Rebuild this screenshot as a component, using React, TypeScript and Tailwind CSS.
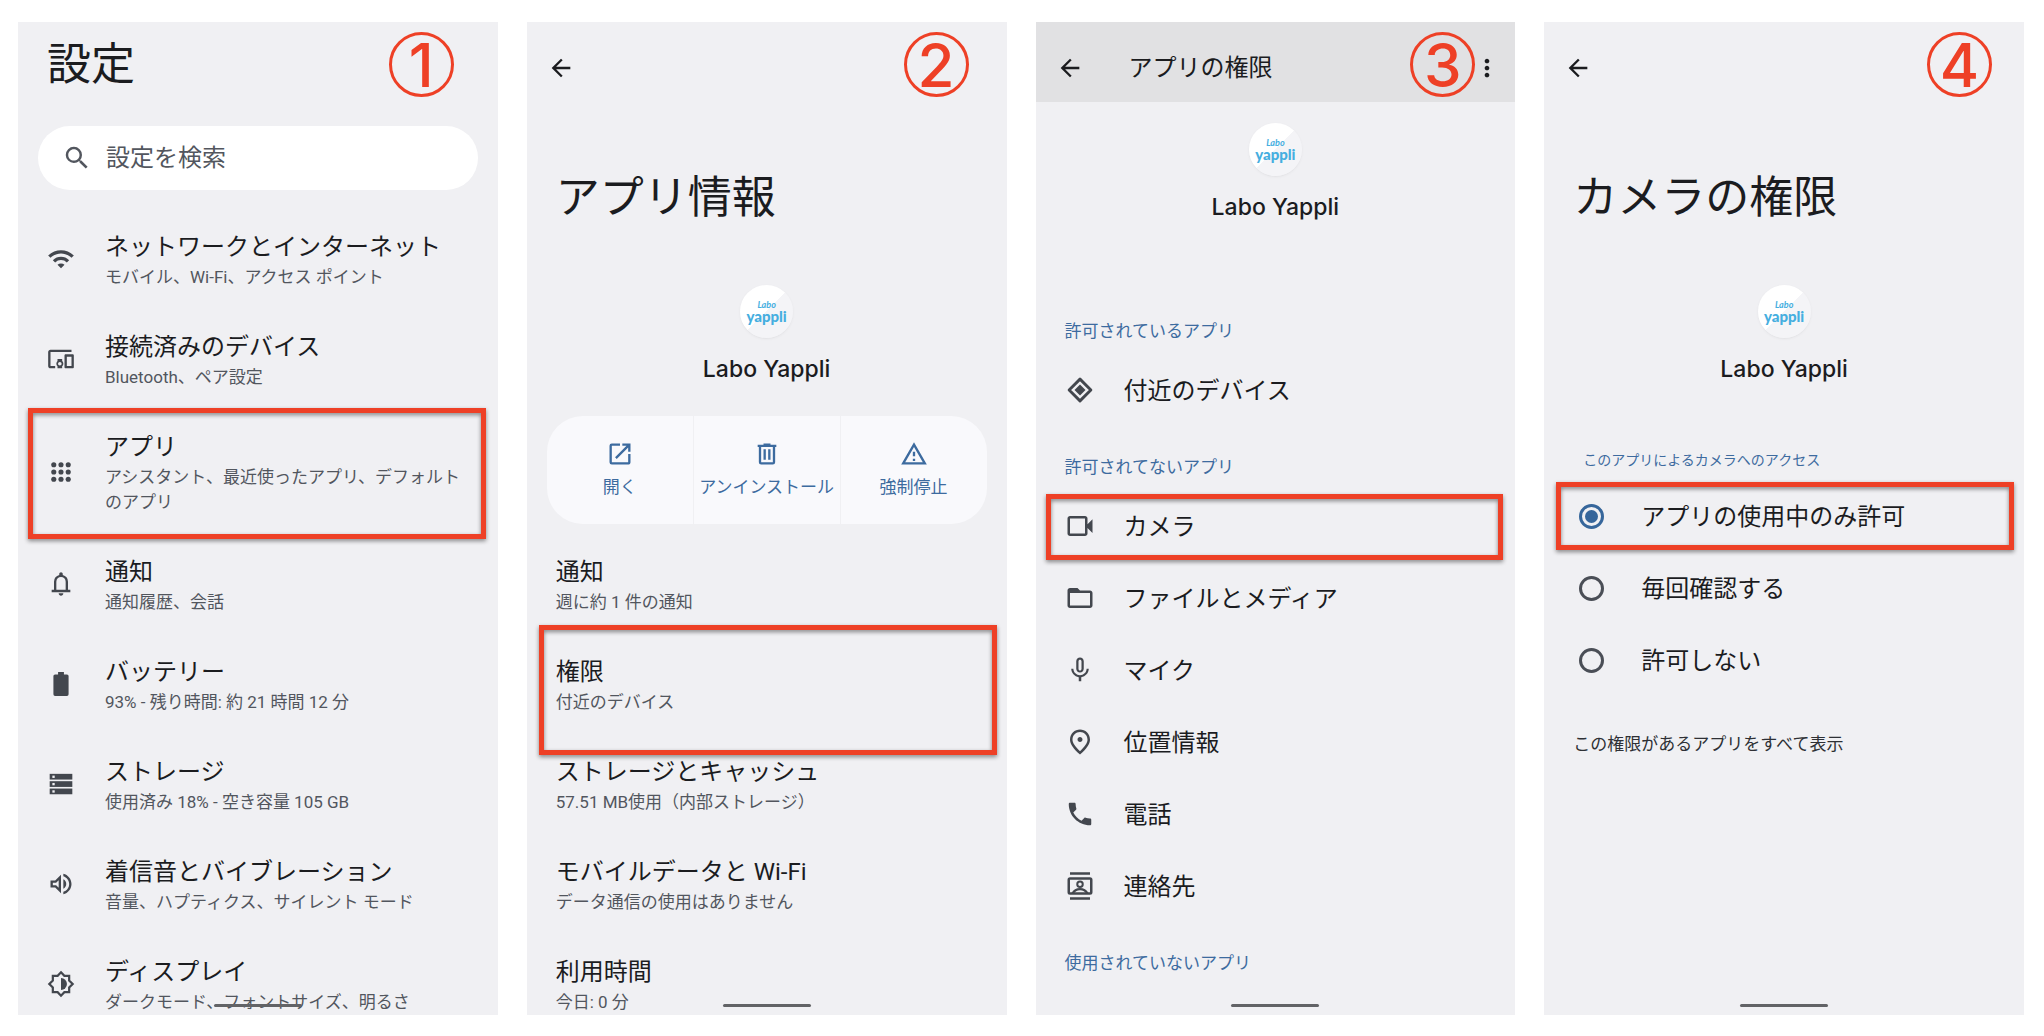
import { useState } from "react";
import type { ReactNode } from "react";
import {
  MdArrowBack,
  MdFolderOpen,
  MdMicNone,
  MdMoreVert,
  MdOpenInNew,
  MdOutlineDevicesOther,
  MdOutlinePlace,
  MdOutlineVolumeUp,
  MdOutlineWarningAmber,
  MdPhone,
  MdSearch,
  MdWifi,
} from "react-icons/md";

const AppsIcon = () => (
  <svg viewBox="0 0 24 24" className="size-7" fill="currentColor">
    {[5.8, 12, 18.2].map((y) =>
      [5.8, 12, 18.2].map((x) => (
        <circle key={`${x}-${y}`} cx={x} cy={y} r="2.2" />
      ))
    )}
  </svg>
);

const BellIcon = () => (
  <svg viewBox="0 -960 960 960" className="size-7" fill="currentColor">
    <path d="M160-200v-80h80v-280q0-83 50-147.500T420-792v-28q0-25 17.500-42.500T480-880t42.500 17.500T540-820v28q80 20 130 84.500T720-560v280h80v80H160Zm320 120q-33 0-56.500-23.500T400-160h160q0 33-23.500 56.500T480-80ZM320-280h320v-280q0-66-47-113t-113-47q-66 0-113 47t-47 113v280Z" />
  </svg>
);

const BatteryIcon = () => (
  <svg viewBox="0 0 24 24" className="size-7" fill="currentColor">
    <path d="M9.500 1.800h5v2h2.600a1.400 1.400 0 0 1 1.400 1.400v15.600a1.400 1.400 0 0 1-1.400 1.400H6.900a1.400 1.400 0 0 1-1.400-1.400V5.200a1.400 1.400 0 0 1 1.400-1.400h2.600v-2Z" />
  </svg>
);

const StorageIcon = () => (
  <svg viewBox="0 0 24 24" className="size-7" fill="currentColor">
    {[3.3, 9.6, 15.9].map((y) => (
      <g key={y}>
        <rect x="2.300" y={y} width="19.400" height="4.900" />
        <rect x="4.600" y={y + 1.5} width="2" height="2" fill="#f0f0f3" />
      </g>
    ))}
  </svg>
);

const DisplayIcon = () => (
  <svg viewBox="0 0 24 24" className="size-7">
    <path
      d="M12 2 14.900 5H19v4.100L22 12l-3 2.900V19h-4.100L12 22l-2.900-3H5v-4.100L2 12l3-2.900V5h4.100Z"
      fill="none"
      stroke="currentColor"
      strokeWidth="1.900"
    />
    <path d="M12 6.900a5.100 5.100 0 0 1 0 10.200Z" fill="currentColor" />
  </svg>
);

const TrashIcon = () => (
  <svg viewBox="0 0 24 24" className="size-7" fill="currentColor">
    <path d="M4 4h5V3h6v1h5v2h-1v13a2 2 0 0 1-2 2H7a2 2 0 0 1-2-2V6H4V4Zm3 2v13h10V6H7Zm2 2h2v9H9V8Zm4 0h2v9h-2V8Z" />
  </svg>
);

const NearbyIcon = () => (
  <svg viewBox="0 0 24 24" className="size-[30px]">
    <path
      d="M12 3.300 20.700 12 12 20.700 3.300 12Z"
      fill="none"
      stroke="currentColor"
      strokeWidth="2.300"
      strokeLinejoin="round"
    />
    <path d="M12 7.600 16.400 12 12 16.400 7.600 12Z" fill="currentColor" />
  </svg>
);

const VideoIcon = () => (
  <svg viewBox="0 -960 960 960" className="size-[30px]" fill="currentColor">
    <path d="M160-160q-33 0-56.500-23.500T80-240v-480q0-33 23.500-56.500T160-800h480q33 0 56.500 23.500T720-720v180l160-160v440L720-420v180q0 33-23.500 56.500T640-160H160Zm0-80h480v-480H160v480Z" />
  </svg>
);

const ContactsIcon = () => (
  <svg viewBox="0 0 24 24" className="size-[30px]">
    <path d="M4 1h16v2H4zM4 21h16v2H4z" fill="currentColor" />
    <rect
      x="3"
      y="6"
      width="18"
      height="12"
      rx="1"
      fill="none"
      stroke="currentColor"
      strokeWidth="2"
    />
    <circle
      cx="12"
      cy="10.500"
      r="2.200"
      fill="none"
      stroke="currentColor"
      strokeWidth="1.600"
    />
    <path
      d="M6 18c1.300-2.400 3.500-3.500 6-3.500s4.700 1.100 6 3.500"
      fill="none"
      stroke="currentColor"
      strokeWidth="1.800"
    />
  </svg>
);

const settings = [
  {
    icon: <MdWifi size={28} />,
    title: "ネットワークとインターネット",
    text: "モバイル、Wi-Fi、アクセス ポイント",
  },
  {
    icon: <MdOutlineDevicesOther size={28} />,
    title: "接続済みのデバイス",
    text: "Bluetooth、ペア設定",
  },
  {
    icon: <AppsIcon />,
    title: "アプリ",
    text: "アシスタント、最近使ったアプリ、デフォルトのアプリ",
    marked: true,
  },
  { icon: <BellIcon />, title: "通知", text: "通知履歴、会話" },
  {
    icon: <BatteryIcon />,
    title: "バッテリー",
    text: "93% - 残り時間: 約 21 時間 12 分",
  },
  {
    icon: <StorageIcon />,
    title: "ストレージ",
    text: "使用済み 18% - 空き容量 105 GB",
  },
  {
    icon: <MdOutlineVolumeUp size={28} />,
    title: "着信音とバイブレーション",
    text: "音量、ハプティクス、サイレント モード",
  },
  {
    icon: <DisplayIcon />,
    title: "ディスプレイ",
    text: "ダークモード、フォントサイズ、明るさ",
  },
];

const appInfo = [
  { title: "通知", text: "週に約 1 件の通知" },
  { title: "権限", text: "付近のデバイス", marked: true },
  { title: "ストレージとキャッシュ", text: "57.51 MB使用（内部ストレージ）" },
  { title: "モバイルデータと Wi-Fi", text: "データ通信の使用はありません" },
  { title: "利用時間", text: "今日: 0 分" },
];

const actions = [
  { icon: <MdOpenInNew size={28} />, label: "開く" },
  { icon: <TrashIcon />, label: "アンインストール" },
  { icon: <MdOutlineWarningAmber size={28} />, label: "強制停止" },
];

const denied = [
  { icon: <VideoIcon />, label: "カメラ", marked: true },
  { icon: <MdFolderOpen size={30} />, label: "ファイルとメディア" },
  { icon: <MdMicNone size={30} />, label: "マイク" },
  { icon: <MdOutlinePlace size={30} />, label: "位置情報" },
  { icon: <MdPhone size={30} />, label: "電話" },
  { icon: <ContactsIcon />, label: "連絡先" },
];

const options = ["アプリの使用中のみ許可", "毎回確認する", "許可しない"];

const Phone = ({ children }: { children: ReactNode }) => (
  <section className="relative overflow-hidden bg-[#f0f0f3]">
    {children}
    <div className="absolute bottom-2 left-1/2 h-[3px] w-[88px] -translate-x-1/2 rounded-full bg-[#626366]"></div>
  </section>
);

const Step = ({ n, className }: { n: number; className: string }) => (
  <span
    className={`absolute top-2.5 flex size-[65px] items-center justify-center rounded-full border-3 border-[#ee4026] font-[Inter,sans-serif] text-[60px] leading-none font-medium text-[#ee4026] ${className}`}
  >
    {n}
  </span>
);

// red frame around the item to tap
const Mark = ({ className }: { className: string }) => (
  <span
    className={`pointer-events-none absolute border-5 border-[#ee4026] drop-shadow-[0_2px_2px_rgba(0,0,0,0.45)] ${className}`}
  ></span>
);

const BackButton = () => (
  <button type="button" aria-label="戻る">
    <MdArrowBack size={28} />
  </button>
);

const AppLogo = () => (
  <div className="flex flex-col items-center">
    <div className="flex size-[53px] flex-col items-center justify-center rounded-full bg-[linear-gradient(135deg,#ffffff_50%,#f4f4f7_50%)] font-[Lato,sans-serif] text-[#45aee0] shadow-sm shadow-black/5">
      <span className="text-[9px] leading-[8px] font-bold italic">Labo</span>
      <span className="text-[15px] leading-[14px] font-black">yappli</span>
    </div>
    <h2 className="mt-[13px] font-[Inter,sans-serif] text-[23px] leading-9 font-medium">
      Labo Yappli
    </h2>
  </div>
);

const Texts = ({ title, text }: { title: string; text: string }) => (
  <span className="block pt-px">
    <span className="block text-2xl leading-9">{title}</span>
    <span className="block text-[17px] leading-[25px] text-[#52565e]">
      {text}
    </span>
  </span>
);

const PermissionRow = ({
  icon,
  label,
  marked,
}: {
  icon: ReactNode;
  label: string;
  marked?: boolean;
}) => (
  <li className="relative">
    <button
      type="button"
      className="flex h-[72px] w-full items-center gap-[29px] pl-[29px] text-left text-2xl"
    >
      <span className="text-[#43474e]">{icon}</span>
      <span className="pt-0.5">{label}</span>
    </button>
    {marked && <Mark className="top-1 right-3 bottom-0.5 left-2.5" />}
  </li>
);

const GroupTitle = ({ children }: { children: ReactNode }) => (
  <h3 className="pl-[29px] text-[17px] leading-[26px] text-[#3d6b9f]">
    {children}
  </h3>
);

const SettingsScreen = () => (
  <Phone>
    <h1 className="pt-[13px] pl-[29px] text-[44px] leading-[60px]">設定</h1>
    <Step n={1} className="right-11" />
    <label className="mx-5 mt-[31px] flex h-16 items-center gap-[14px] rounded-full bg-white pl-[24px] text-[#52565e]">
      <MdSearch size={30} className="shrink-0" />
      <input
        type="search"
        aria-label="設定を検索"
        placeholder="設定を検索"
        className="w-full bg-transparent text-2xl outline-none placeholder:text-[#52565e]"
      />
    </label>
    <ul className="mt-[38px] flex flex-col gap-[38px]">
      {settings.map((s) => (
        <li key={s.title} className="relative">
          <button
            type="button"
            className="flex w-full items-center gap-[30px] pr-6 pl-[29px] text-left"
          >
            <span className="shrink-0 text-[#43474e]">{s.icon}</span>
            <Texts title={s.title} text={s.text} />
          </button>
          {s.marked && <Mark className="-top-5 right-3 -bottom-6 left-2.5" />}
        </li>
      ))}
    </ul>
  </Phone>
);

const AppInfoScreen = () => (
  <Phone>
    <header className="flex items-center pt-8 pb-5 pl-5">
      <BackButton />
    </header>
    <Step n={2} className="right-[38px]" />
    <h1 className="mt-[66px] mb-[57px] pl-[29px] text-[44px] leading-[60px]">
      アプリ情報
    </h1>
    <AppLogo />
    <div className="mx-5 mt-[29px] grid grid-cols-3 gap-px overflow-hidden rounded-[36px] text-[#3d6b9f]">
      {actions.map((a) => (
        <button
          key={a.label}
          type="button"
          className="flex flex-col items-center gap-1.5 bg-[#f9f9fc] py-6 text-[17px] leading-[26px]"
        >
          {a.icon}
          {a.label}
        </button>
      ))}
    </div>
    <ul className="mt-[29px] flex flex-col gap-[38px]">
      {appInfo.map((s) => (
        <li key={s.title} className="relative">
          <button type="button" className="w-full pl-[29px] text-left">
            <Texts title={s.title} text={s.text} />
          </button>
          {s.marked && <Mark className="-top-7 right-2.5 -bottom-10 left-3" />}
        </li>
      ))}
    </ul>
  </Phone>
);

const PermissionsScreen = () => (
  <Phone>
    <header className="flex items-center gap-[45px] bg-[#e1e1e3] pt-8 pr-3.5 pb-5 pl-5">
      <BackButton />
      <h1 className="flex-1 text-2xl leading-7">アプリの権限</h1>
      <button type="button" aria-label="その他">
        <MdMoreVert size={28} />
      </button>
    </header>
    <Step n={3} className="right-10" />
    <div className="mt-[21px] mb-[93px]">
      <AppLogo />
    </div>
    <GroupTitle>許可されているアプリ</GroupTitle>
    <ul className="mt-2.5 mb-7">
      <PermissionRow icon={<NearbyIcon />} label="付近のデバイス" />
    </ul>
    <GroupTitle>許可されてないアプリ</GroupTitle>
    <ul className="mt-2.5 mb-7">
      {denied.map((d) => (
        <PermissionRow key={d.label} {...d} />
      ))}
    </ul>
    <GroupTitle>使用されていないアプリ</GroupTitle>
  </Phone>
);

const CameraScreen = () => {
  const [choice, setChoice] = useState(options[0]);
  return (
    <Phone>
      <header className="flex items-center pt-8 pb-5 pl-5">
        <BackButton />
      </header>
      <Step n={4} className="right-8" />
      <h1 className="mt-[66px] mb-[57px] pl-[29px] text-[44px] leading-[60px]">
        カメラの権限
      </h1>
      <AppLogo />
      <fieldset className="mt-[60px]">
        <legend className="pl-[39px] text-sm leading-[26px] text-[#3d6b9f]">
          このアプリによるカメラへのアクセス
        </legend>
        <div className="pt-[7px]">
          {options.map((o, i) => (
            <div key={o} className="relative">
              <label className="flex h-[72px] items-center gap-[37px] pl-[35px] text-2xl">
                <input
                  type="radio"
                  name="camera"
                  checked={choice === o}
                  onChange={() => setChoice(o)}
                  className="flex size-[25px] appearance-none items-center justify-center rounded-full border-[3px] border-[#4a4e56] checked:border-[#36669b] checked:before:size-[13px] checked:before:rounded-full checked:before:bg-[#36669b]"
                />
                <span className="pt-0.5">{o}</span>
              </label>
              {i === 0 && (
                <Mark className="top-0.5 right-2.5 bottom-0.5 left-3" />
              )}
            </div>
          ))}
        </div>
      </fieldset>
      <a
        href="#all"
        className="mt-[35px] block pl-[29px] text-[17px] leading-[26px] text-[#2e3035]"
      >
        この権限があるアプリをすべて表示
      </a>
    </Phone>
  );
};

const App = () => {
  return (
    <main
      lang="ja"
      className="grid grid-cols-4 gap-[29px] bg-white pt-[22px] pr-5 pb-[21px] pl-[18px] font-[Roboto,'Noto_Sans_CJK_JP',sans-serif] text-[#1b1c1f]"
    >
      <SettingsScreen />
      <AppInfoScreen />
      <PermissionsScreen />
      <CameraScreen />
    </main>
  );
};

export default App;
